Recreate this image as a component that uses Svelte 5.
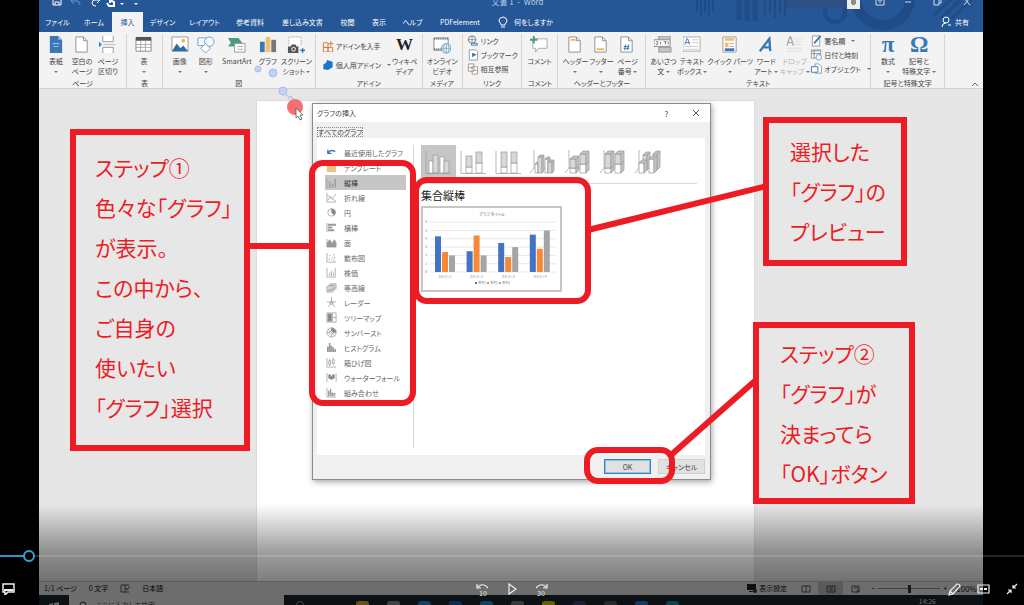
<!-- App.svelte -->
<script>
    const tabs = [
        'ファイル', 'ホーム', '挿入', 'デザイン', 'レイアウト', '参考資料',
        '差し込み文書', '校閲', '表示', 'ヘルプ', 'PDFelement'
    ];

    const sheet = '<path d="M3 1h8l4 4v12H3z" fill="#fff" stroke="#8f8f8f"/><path d="M11 1v4h4" fill="none" stroke="#8f8f8f"/>';

    const icons = {
        cover: '<path d="M3 0h9l4 4v14H3z" fill="#3a78b5"/><path d="M12 0v4h4" fill="#9cc0e0"/><path d="M6 8h7M7 11h5" stroke="#a9cdec"/>',
        blank: sheet,
        pageBreak: '<path d="M4 0v6h11V0M4 18v-6h11v6" fill="#fff" stroke="#9a9a9a"/><path d="M5 9h13" stroke="#aaa" stroke-dasharray="2 1"/><path d="M0 6l3 3-3 3z" fill="#3a78b5"/>',
        table: '<path d="M1 2h16v14H1z" fill="#fff" stroke="#8a8a8a"/><path d="M1 1h16v4H1z" fill="#555"/><path d="M1 9h16M1 12h16M6 5v11M11 5v11" stroke="#999" stroke-width=".8"/>',
        picture: '<path d="M1 1h17v15H1z" fill="#fff" stroke="#999"/><path d="M1 16l5-8 4 5 3-3 5 6z" fill="#2f6da8"/><circle cx="13" cy="5" r="2" fill="#efb758"/>',
        shapes: '<path d="M1 2h9v8H1z" fill="#fff" stroke="#6a9fca"/><circle cx="13" cy="6" r="5" fill="#f3f8fc" stroke="#6a9fca"/><path d="M9 8l5 5-5 5-5-5z" fill="#fff" stroke="#6a9fca"/>',
        smartart: '<path d="M0 2h11l4 5-4 4H0l3-4z" fill="#4c9b7c"/><path d="M7 8h11v9H7z" fill="#fff" stroke="#999"/><path d="M10 11h6M10 14h6" stroke="#aaa"/>',
        chart: '<path d="M1 6h5v11H1z" fill="#3a78b5"/><path d="M7 1h5v16H7z" fill="#efc06d"/><path d="M13 4h5v13h-5z" fill="#777"/>',
        screenshot: '<path d="M2 9V1h13v8" fill="#fff" stroke="#aaa" stroke-dasharray="2 1"/><path d="M1 11h3l1-2h4l1 2h2v7H1z" fill="#555"/><circle cx="7" cy="14" r="2" fill="#555" stroke="#fff"/><path d="M14 15h5M16.500 13v5" stroke="#3a78b5" stroke-width="1.500"/>',
        video: '<path d="M1 2h15v13H1z" fill="#fff" stroke="#888"/><path d="M1 3h15M1 14h15" stroke="#666" stroke-width="2" stroke-dasharray="1 1"/><circle cx="14" cy="13" r="5" fill="#eaf3fa" stroke="#5f9bc9"/><path d="M9 13h10M14 8v10M12 9q-2 4 0 8M16 9q2 4 0 8" fill="none" stroke="#5f9bc9" stroke-width=".7"/>',
        comment: '<path d="M3 3h15v10h-9l-3 4v-4H3z" fill="#fff" stroke="#aaa"/><path d="M0 4h8M4 0v8" stroke="#4c9b7c" stroke-width="2"/>',
        header: sheet + '<path d="M5 3h5v2H5z" fill="#efb758"/>',
        footer: sheet + '<path d="M5 13h8v2H5z" fill="#efb758"/>',
        pageNo: sheet + '<path d="M8 9l-1 6M11 9l-1 6M6 11h6M6 13h6" stroke="#3a78b5"/>',
        greeting: '<path d="M5 0h12v5H5zM5 12h13v5H5z" fill="#c4c4c4" stroke="#999"/><path d="M0 4h17v7H0z" fill="#fff" stroke="#888"/><path d="M2 6q3-1 2 2T2 8M7 6v3M10 6h3q-3 2 0 3M15 6v3" fill="none" stroke="#555" stroke-width=".8"/>',
        textbox: '<path d="M0 1h18v15H0z" fill="#fff" stroke="#aaa"/><path d="M2 9l2-6h1l2 6M3 7h4" fill="none" stroke="#3a78b5"/><path d="M10 4h6M10 7h6M2 11h14M2 14h14" stroke="#bbb" stroke-width=".8"/>',
        quick: '<path d="M2 1h14v16H2z" fill="#fff" stroke="#999"/><path d="M4 2h10v3H4zM4 7h4v5H4z" fill="#efc06d"/><path d="M9 8h5M9 11h5" stroke="#aaa"/><path d="M4 13h10v3H4z" fill="#3a78b5"/>',
        wordart: '<path d="M3 16L13 3l1 13M7 12h7" fill="none" stroke="#3a78b5" stroke-width="2.500"/>',
        dropcap: '<path d="M1 10l3-9h1l3 9M2 7h5" fill="none" stroke="#aaa" stroke-width="1.5"/><path d="M10 3h7M10 6h7M10 9h7M1 13h16M1 16h16" stroke="#ddd"/>',
        store: '<path d="M1 3h5v5H1zM1 8h5v5H1zM6 8h5v5H6zM9 1v6M6 4h6" fill="none" stroke="#d8763f"/>',
        addins: '<path d="M1 6l3-2 1-3 6 2v6l-5 3-5-1z" fill="#1976c8"/>',
        link: '<circle cx="5" cy="5" r="4" fill="#eef3f8" stroke="#777"/><path d="M1 5h8M5 1v8" stroke="#777" stroke-width=".7"/><path d="M4 10h7" stroke="#3a78b5" stroke-width="3"/><path d="M5 10h5" stroke="#fff"/>',
        bookmark: '<path d="M2 1h7l2 2v9H2z" fill="#fff" stroke="#999"/><path d="M5 4l5 2-5 3z" fill="#3a78b5"/>',
        crossref: '<path d="M1 1h6v8H1zM5 4h6v8H5z" fill="#fff" stroke="#999"/><path d="M2 5h4M7 8h3" stroke="#d8763f"/>',
        signature: '<path d="M2 1h8v11H2z" fill="#fff" stroke="#999"/><path d="M4 9l7-8" stroke="#3a78b5" stroke-width="2"/>',
        date: '<path d="M1 1h10v9H1z" fill="#fff" stroke="#999"/><path d="M1 2h10M1 5h10M4 2v8" stroke="#888"/><circle cx="9" cy="9" r="3" fill="#fff" stroke="#6a9fca"/>',
        object: '<path d="M5 1h4l3 3v7H5z" fill="#fff" stroke="#999"/><path d="M1 4h7v6H1z" fill="#fff" stroke="#3a78b5"/>'
    };

    const groups = [
        { name: 'ページ', items: [
            { icon: 'cover', lines: ['表紙', '▾'] },
            { icon: 'blank', lines: ['空白の', 'ページ'] },
            { icon: 'pageBreak', lines: ['ページ', '区切り'] }
        ] },
        { name: '表', items: [{ icon: 'table', lines: ['表', '▾'] }] },
        { name: '図', items: [
            { icon: 'picture', lines: ['画像', '▾'] },
            { icon: 'shapes', lines: ['図形', '▾'] },
            { icon: 'smartart', lines: ['SmartArt'], size: 'wide' },
            { icon: 'chart', lines: ['グラフ'] },
            { icon: 'screenshot', lines: ['スクリーン', 'ショット ▾'], size: 'mid' }
        ] },
        { name: 'アドイン', spaced: true,
            rows: [
                { icon: 'store', text: 'アドインを入手' },
                { icon: 'addins', text: '個人用アドイン', arrow: true }
            ],
            items: [{ letter: 'W', lines: ['ウィキペ', 'ディア'], tone: 'wiki' }]
        },
        { name: 'メディア', items: [{ icon: 'video', lines: ['オンライン', 'ビデオ'], size: 'mid' }] },
        { name: 'リンク', rows: [
            { icon: 'link', text: 'リンク' },
            { icon: 'bookmark', text: 'ブックマーク' },
            { icon: 'crossref', text: '相互参照' }
        ] },
        { name: 'コメント', items: [{ icon: 'comment', lines: ['コメント'] }] },
        { name: 'ヘッダーとフッター', items: [
            { icon: 'header', lines: ['ヘッダー', '▾'] },
            { icon: 'footer', lines: ['フッター', '▾'] },
            { icon: 'pageNo', lines: ['ページ', '番号 ▾'] }
        ] },
        { name: 'テキスト',
            items: [
                { icon: 'greeting', lines: ['あいさつ', '文 ▾'] },
                { icon: 'textbox', lines: ['テキスト', 'ボックス ▾'], size: 'mid' },
                { icon: 'quick', lines: ['クイック パーツ', '▾'], size: 'full' },
                { icon: 'wordart', lines: ['ワード', 'アート ▾'] },
                { icon: 'dropcap', lines: ['ドロップ', 'キャップ ▾'], disabled: true, size: 'mid' }
            ],
            trailing: [
                { icon: 'signature', text: '署名欄', arrow: true },
                { icon: 'date', text: '日付と時刻' },
                { icon: 'object', text: 'オブジェクト', arrow: true }
            ]
        },
        { name: '記号と特殊文字', items: [
            { letter: 'π', lines: ['数式', '▾'], tone: 'symbol' },
            { letter: 'Ω', lines: ['記号と', '特殊文字 ▾'], tone: 'symbol', size: 'wide' }
        ] }
    ];

    const axis = '<path d="M1 1v10h10" fill="none"/>';
    const kinds = [
        { name: '最近使用したグラフ', icon: '<path d="M2 3v4h4M2 7q3-5 8-2" fill="none" stroke="#3a78b5" stroke-width="1.5"/>' },
        { name: 'テンプレート', icon: '<path d="M1 3h10v8H1z" fill="#efc27d" stroke="none"/>' },
        { name: '縦棒', icon: axis + '<path d="M4 10V5M7 10V7M10 10V2" stroke-width="1.5"/>' },
        { name: '折れ線', icon: axis + '<path d="M2 9l3-4 2 2 4-5M2 4l4 3 5 3" fill="none"/>' },
        { name: '円', icon: '<circle cx="6" cy="6" r="4" fill="none"/><path d="M6 2v4l3 3a4 4 0 0 0-3-7" fill="#888"/>' },
        { name: '横棒', icon: '<path d="M1 1v10"/><path d="M2 3h9M2 6h5M2 9h7" stroke-width="2"/>' },
        { name: '面', icon: '<path d="M1 2v9h10V6L9 3 7 7 4 3 1 7" fill="#999"/>' },
        { name: '散布図', icon: axis + '<path d="M4 4h1M8 3h1M6 7h1M3 8h1M9 6h1M8 9h1" stroke-width="1.5"/>' },
        { name: '株価', icon: axis + '<path d="M4 10V6M6 10V4M8 10V6M10 10V1"/>' },
        { name: '等高線', icon: '<path d="M1 5l4-3h6v5l-4 4H1zM3 6q4-4 6 0-3 3-6 2" fill="#ddd"/><path d="M4 4h5M2 9h5l3-3" fill="none"/>' },
        { name: 'レーダー', icon: '<path d="M6 0v6l5-1M6 6l4 5M6 6l-4 5M6 6L1 5" fill="none"/><path d="M6 4l2 2-1 2H5L4 6z" fill="none"/>' },
        { name: 'ツリーマップ', icon: '<path d="M1 1h10v10H1z" fill="#fff"/><path d="M2 2h4v8H2z" fill="#888"/><path d="M7 1v10M7 6h4"/>' },
        { name: 'サンバースト', icon: '<circle cx="6" cy="6" r="5" fill="none"/><circle cx="6" cy="6" r="2" fill="none"/><path d="M6 1v3M8 6h3M6 8v3M1 6h3M2 2l8 8"/><path d="M6 1a5 5 0 0 1 5 5H8L6 4z" fill="#888"/>' },
        { name: 'ヒストグラム', icon: '<path d="M2 11V5M4 11V1M6 11V4M8 11V6M10 11V8" stroke-width="1.8"/>' },
        { name: '箱ひげ図', icon: axis + '<path d="M4 2v8M8 1v8" /><path d="M3 4h2v4H3zM7 3h2v4H7z" fill="#fff"/>' },
        { name: 'ウォーターフォール', icon: '<path d="M1 1v10M11 1v10"/><path d="M3 3h2v4H3zM5 5h2v3H5zM7 3h2v4H7z" fill="#777"/>' },
        { name: '組み合わせ', icon: axis + '<path d="M3 10V4M5 10V2M7 10V6M9 10V7" stroke-width="1.5"/><path d="M2 6l4 2 5-1" fill="none"/>' }
    ];

    // x, y, width, height, filled
    const subtypes = [
        { name: '集合縦棒', depth: 0, bars: [[8, 16, 4, 12, 0], [12, 10, 5, 18, 1], [19, 12, 4, 16, 0], [23, 16, 5, 12, 1]] },
        { name: '積み上げ縦棒', depth: 0, bars: [[10, 22, 6, 6, 0], [10, 11, 6, 11, 1], [20, 18, 6, 10, 0], [20, 7, 6, 11, 1]] },
        { name: '100% 積み上げ縦棒', depth: 0, bars: [[10, 22, 6, 6, 0], [10, 7, 6, 15, 1], [20, 18, 6, 10, 0], [20, 7, 6, 11, 1]] },
        { name: '3-D 集合縦棒', depth: 2, bars: [[9, 19, 3, 9, 0], [12, 12, 4, 16, 1], [19, 14, 3, 14, 0], [22, 17, 4, 11, 1]] },
        { name: '3-D 積み上げ縦棒', depth: 3, bars: [[9, 23, 6, 5, 0], [9, 14, 6, 9, 1], [19, 19, 6, 9, 0], [19, 9, 6, 10, 1]] },
        { name: '3-D 100% 積み上げ縦棒', depth: 3, bars: [[9, 23, 6, 5, 0], [9, 9, 6, 14, 1], [19, 19, 6, 9, 0], [19, 9, 6, 10, 1]] },
        { name: '3-D 縦棒', depth: 3, bars: [[12, 10, 4, 15, 1], [8, 18, 5, 10, 0], [22, 9, 4, 16, 1], [18, 14, 5, 14, 0]] }
    ];

    const series = [
        { name: '系列1', color: '#4472c4', values: [4.3, 2.5, 3.5, 4.5] },
        { name: '系列2', color: '#f5883a', values: [2.4, 4.4, 1.8, 2.8] },
        { name: '系列3', color: '#a5a5a5', values: [2, 2, 3, 5] }
    ];
    const unit = 8.3;
    const baseline = 64;

    const taskIcons = ['#d9a23c', '#8a8a8a', '#2088c9', '#1a5fae', '#1f8fc4', '#777777', '#d9c800', '#39406a', '#555555', '#2a78c4', '#1c8d9a'];

    let activeTab = $state('挿入');
    let activeKind = $state('縦棒');
    let activeSubtype = $state(0);
    let position = $state(2.3);
    let zoomLevel = $state(50);
</script>

{#snippet label(line)}
    {#if line.endsWith('▾')}
        {line.slice(0, -1)}<i class="arrow"></i>
    {:else}
        {line}
    {/if}
{/snippet}

{#snippet rowList(rows)}
    <div class="rows">
        {#each rows as row}
            <button class="row-btn">
                <svg width="12" height="12" viewBox="0 0 12 13">{@html icons[row.icon]}</svg>
                {row.text}
                {#if row.arrow}<i class="arrow spaced"></i>{/if}
            </button>
        {/each}
    </div>
{/snippet}

<main class="player">
    <section class="video">
        <header class="topbar">
            <svg class="pattern" width="300" height="32" viewBox="0 0 300 32" fill="none" stroke="#1f4c86">
                <path d="M14 0v12M18 0v16M22 0v13M26 0v17M30 0v12" stroke-width="2" />
                <path d="M56 0v20M64 0v21M72 0v21" stroke-width="5" />
                <path d="M82 0v17M87 0v14M92 0v18M97 0v14M102 0v16" stroke-width="2" />
                <circle cx="152" cy="12" r="10" stroke-width="4" />
                <circle cx="200" cy="-2" r="27" stroke-width="10" />
                <path d="M250 16l18-16M258 18l20-18M268 19l20-19" stroke-width="3" />
            </svg>
            <div class="titlebar">
                <div class="quick">
                    <svg width="90" height="12" viewBox="0 0 90 12" fill="none" stroke="#fff">
                        <path d="M1 1h8v8H1zM3 9V6h4v3" />
                        <path d="M20 5h5q3 0 3 4M22 2l-3 3 3 3" stroke="#6f93c4" />
                        <path d="M47 4h-4q-3 0-3 3t4 3M45 1l3 3-3 3" />
                        <path d="M58 7V1M58 4l4 2v4h-5l-2-3" stroke-width="2" />
                        <path d="M68 7l2 2 2-2zM82 7l2 2 2-2z" fill="#fff" stroke="none" />
                    </svg>
                </div>
                <span class="doc-title">文書 1 &nbsp;-&nbsp; Word</span>
                <div class="window-tools">
                    <span class="account"></span>
                    <span class="avatar"></span>
                    <svg width="110" height="12" viewBox="0 0 110 12" fill="none" stroke="#d3deed">
                        <path d="M4 1h8v8H4zM8 7V3M6 5l2-2 2 2M33 6h6M62 3h5v6h-5zM64 3V1h5v6h-2M92 2l6 7M98 2l-6 7" />
                    </svg>
                </div>
            </div>
            <nav class="tabs">
                {#each tabs as tab}
                    <button class="tab" class:active={activeTab === tab} onclick={() => (activeTab = tab)}>{tab}</button>
                {/each}
                <button class="tab tell-me">
                    <svg width="10" height="12" viewBox="0 0 10 12" fill="none" stroke="#fff">
                        <path d="M3 8Q1 6 1 4t4-3q4 1 4 3T7 8v1H3zM3 11h4" />
                    </svg>
                    何をしますか
                </button>
                <button class="tab share">
                    <svg width="10" height="12" viewBox="0 0 10 12" fill="none" stroke="#fff">
                        <circle cx="5" cy="4" r="3" /><path d="M1 11q0-4 4-4M7 9h3" />
                    </svg>
                    共有
                </button>
            </nav>
        </header>

        <div class="ribbon">
            {#each groups as group}
                <div class="group">
                    <div class="group-body" class:spaced={group.spaced}>
                        {#if group.rows}{@render rowList(group.rows)}{/if}
                        {#each group.items ?? [] as item}
                            <button class="tool {item.size ?? ''}" disabled={item.disabled}>
                                {#if item.letter}
                                    <span class="letter {item.tone}">{item.letter}</span>
                                {:else}
                                    <svg width="18" height="18" viewBox="0 0 19 19">{@html icons[item.icon]}</svg>
                                {/if}
                                {#each item.lines as line}
                                    <span class="line">{@render label(line)}</span>
                                {/each}
                            </button>
                        {/each}
                        {#if group.trailing}{@render rowList(group.trailing)}{/if}
                    </div>
                    <div class="group-name">{group.name}</div>
                </div>
            {/each}
            <button class="collapse" aria-label="リボンを折りたたむ">
                <svg width="8" height="6" viewBox="0 0 8 6" fill="none" stroke="#666"><path d="M1 5l3-3 3 3" /></svg>
            </button>
        </div>

        <div class="canvas">
            <div class="paper"></div>
        </div>

        <footer class="statusbar">
            <span>1/1 ページ</span>
            <span>0 文字</span>
            <svg width="10" height="9" viewBox="0 0 10 9" fill="none" stroke="#555"><path d="M1 1h4v7H1zM5 1h4M5 8h4M6 4l1 2 3-4" /></svg>
            <span>日本語</span>
            <div class="view-tools">
                <span class="display-setting">
                    <svg width="10" height="9" viewBox="0 0 10 9"><path d="M0 0h9v6H0zM2 7h4v1H2z" fill="#222" /><circle cx="8" cy="7" r="2" fill="#333" /></svg>
                    表示設定
                </span>
                <button class="view" aria-label="閲覧モード">
                    <svg width="10" height="8" viewBox="0 0 10 8" fill="none" stroke="#555"><path d="M1 1h8v6H1zM5 1v6" /></svg>
                </button>
                <button class="view on" aria-label="印刷レイアウト">
                    <svg width="10" height="8" viewBox="0 0 10 8" fill="none" stroke="#444"><path d="M1 1h8v6H1zM3 3h4M3 5h4" /></svg>
                </button>
                <button class="view" aria-label="Web レイアウト">
                    <svg width="10" height="8" viewBox="0 0 10 8" fill="none" stroke="#555"><path d="M1 1h7v6H1zM3 3h4" /><circle cx="7" cy="6" r="1" /></svg>
                </button>
                <span class="zoom-sign">−</span>
                <input class="zoom-range" type="range" aria-label="ズーム" bind:value={zoomLevel} />
                <span class="zoom-sign">+</span>
                <span class="percent">100%</span>
            </div>
        </footer>

        <div class="taskbar">
            <div class="start">
                <svg width="10" height="10" viewBox="0 0 10 10" fill="#ccc"><path d="M0 2l4-1v4H0zM5 1l5-1v5H5zM0 6h4v4H0zM5 6h5v4H5z" /></svg>
            </div>
            <div class="search">
                <svg width="8" height="8" viewBox="0 0 8 8" fill="none" stroke="#333"><circle cx="4" cy="4" r="3" /></svg>
                ここに入力して検索
            </div>
            <div class="apps">
                <span class="ring"></span>
                {#each taskIcons as color}
                    <span class="app" style:background={color}></span>
                {/each}
            </div>
            <time class="clock">14:26</time>
        </div>
    </section>

    <div class="stage">
        <svg class="pointer-trail" width="60" height="64" viewBox="0 0 60 64">
            <g fill="#c3d0fa" stroke="#a9baf4">
                <circle cx="8" cy="9" r="3" /><circle cx="23" cy="13" r="4" /><circle cx="33" cy="31" r="4" />
                <path d="M36 35l8 4M38 39l4-3" fill="none" />
            </g>
            <circle cx="45" cy="47" r="8" fill="#f56e70" />
            <path d="M46 48v10l2-2 2 4 2-1-2-4h3z" fill="#fff" stroke="#555" stroke-width=".8" />
        </svg>

        <section class="dialog" aria-label="グラフの挿入">
            <div class="dialog-title">
                <span>グラフの挿入</span>
                <button class="title-btn">?</button>
                <button class="title-btn" aria-label="閉じる">
                    <svg width="8" height="8" viewBox="0 0 8 8" fill="none" stroke="#555"><path d="M1 1l6 6M7 1L1 7" /></svg>
                </button>
            </div>
            <div class="dialog-tabs"><button class="all-charts">すべてのグラフ</button></div>
            <div class="dialog-body">
                <ul class="kinds">
                    {#each kinds as kind}
                        <li>
                            <button class="kind" class:selected={activeKind === kind.name} onclick={() => (activeKind = kind.name)}>
                                <svg width="11" height="11" viewBox="0 0 12 12" stroke="#999" stroke-width=".8">{@html kind.icon}</svg>
                                {kind.name}
                            </button>
                        </li>
                    {/each}
                </ul>
                <div class="detail">
                    <div class="subtypes">
                        {#each subtypes as type, i}
                            <button class="subtype" class:selected={activeSubtype === i} aria-label={type.name} onclick={() => (activeSubtype = i)}>
                                <svg width="35" height="33" viewBox="0 0 35 33" stroke="#999" stroke-width=".7">
                                    {#if type.depth}
                                        <path d="M8 5v18l-4 5M8 23h20" fill="none" />
                                    {:else}
                                        <path d="M5 6v22.500h25" fill="none" />
                                    {/if}
                                    {#each type.bars as [x, y, w, h, filled]}
                                        <rect {x} {y} width={w} height={h} fill={filled ? '#d8d8d8' : '#fff'} />
                                        {#if type.depth}
                                            <path d="M{x} {y}l{type.depth} -{type.depth}h{w}v{h}l-{type.depth} {type.depth}v-{h}zM{x + w} {y}l{type.depth} -{type.depth}" fill="#c4c4c4" />
                                        {/if}
                                    {/each}
                                </svg>
                            </button>
                        {/each}
                    </div>
                    <h2>{subtypes[activeSubtype].name}</h2>
                    <div class="preview">
                        <svg width="137" height="82" viewBox="0 0 137 82">
                            <text class="chart-title" x="69" y="8">グラフ タイトル</text>
                            {#each [0, 1, 2, 3, 4, 5, 6] as tick}
                                <path d="M7 {baseline - tick * unit}h126" stroke="#dedede" stroke-width=".7" />
                                <text class="tiny" x="3" y={baseline + 1 - tick * unit}>{tick}</text>
                            {/each}
                            {#each series as s, si}
                                {#each s.values as value, i}
                                    <rect x={12 + i * 31.6 + si * 7} y={baseline - value * unit} width="6" height={value * unit} fill={s.color} />
                                {/each}
                                <rect x={52 + si * 12} y="74" width="2" height="2" fill={s.color} />
                                <text class="tiny" x={59 + si * 12} y="76">{s.name}</text>
                            {/each}
                            {#each [1, 2, 3, 4] as n}
                                <text class="tiny" x={22 + (n - 1) * 31.6} y="70">カテゴリ {n}</text>
                            {/each}
                        </svg>
                    </div>
                </div>
            </div>
            <div class="dialog-actions">
                <button class="action primary">OK</button>
                <button class="action">キャンセル</button>
            </div>
        </section>

        <svg class="connectors" width="944" height="605" viewBox="39 0 944 605" fill="none" stroke="#ed1c24">
            <path d="M249 246h63M588 230l179-44M671 455l85-75" stroke-width="6" />
        </svg>
        <div class="frame frame-kinds"></div>
        <div class="frame frame-preview"></div>
        <div class="frame frame-ok"></div>

        <p class="note note-step1">ステップ①<br />色々な「グラフ」<br />が表示。<br />この中から、<br />ご自身の<br />使いたい<br />「グラフ」選択</p>
        <p class="note note-preview">選択した<br />「グラフ」の<br />プレビュー</p>
        <p class="note note-step2">ステップ②<br />「グラフ」が<br />決まってら<br />「OK」ボタン</p>
    </div>

    <div class="controls">
        <input class="seek" type="range" min="0" max="100" step="0.1" aria-label="再生位置" bind:value={position} style:--played="{position}%" />
        <div class="control-row">
            <div class="side">
                <button class="ctl narrow" aria-label="字幕">
                    <svg width="14" height="12" viewBox="0 0 14 12" fill="none" stroke="#eee" stroke-width="1.500"><path d="M1 1h11v8H6l-3 3V9H1z" /><path d="M2 7h9" stroke-width="2" /></svg>
                </button>
            </div>
            <div class="side">
                <button class="ctl skip" aria-label="10 秒戻る">
                    <svg width="14" height="7" viewBox="0 0 14 7" fill="none" stroke="#eee" stroke-width="1.200"><path d="M2 4q5-5 10 1M1 1v4h4" /></svg>
                    10
                </button>
                <button class="ctl" aria-label="再生">
                    <svg width="10" height="12" viewBox="0 0 10 12" fill="none" stroke="#eee" stroke-width="1.200"><path d="M2 1l7 5-7 5z" /></svg>
                </button>
                <button class="ctl skip" aria-label="30 秒進む">
                    <svg width="14" height="7" viewBox="0 0 14 7" fill="none" stroke="#eee" stroke-width="1.200"><path d="M2 5q5-6 10-1M13 1v4H9" /></svg>
                    30
                </button>
            </div>
            <div class="side end">
                <button class="ctl" aria-label="編集">
                    <svg width="13" height="13" viewBox="0 0 13 13" fill="none" stroke="#eee" stroke-width="1.200"><path d="M1 12l1-4 7-7q3 0 3 2l-7 8zM2 8l3 3" /></svg>
                </button>
                <button class="ctl" aria-label="ミニ ビュー">
                    <svg width="13" height="10" viewBox="0 0 13 10" fill="none" stroke="#eee" stroke-width="1.200"><path d="M1 1h11v8H1z" /><path d="M3 5h3M7 5h3" stroke-width="2" /></svg>
                </button>
                <button class="ctl" aria-label="全画面表示の終了">
                    <svg width="12" height="12" viewBox="0 0 12 12" fill="none" stroke="#eee" stroke-width="1.200"><path d="M1 11l4-4M2 7h3v3M11 1L7 5M7 2v3h3" /></svg>
                </button>
            </div>
        </div>
    </div>
</main>

<style>
    :global(body) {
        margin: 0;
        background: #000;
    }

    .player {
        position: relative;
        height: 100vh;
        min-height: 605px;
        padding: 0 41px 0 39px;
        box-sizing: border-box;
        overflow: hidden;
        background: #000;
        color: #444;
        font-family: "Noto Sans CJK JP", sans-serif;
        font-size: 7px;
        font-feature-settings: "palt";
    }
    .player button {
        margin: 0;
        padding: 0;
        border: none;
        background: none;
        color: inherit;
        font: inherit;
        font-feature-settings: inherit;
        white-space: nowrap;
    }
    svg {
        display: block;
        flex-shrink: 0;
    }

    .video {
        display: flex;
        flex-direction: column;
        height: 100%;
        background: #e6e6e6;
    }

    /* ── Title bar and tabs ── */
    .topbar {
        position: relative;
        overflow: hidden;
        flex-shrink: 0;
        background: #255797;
        color: #fff;
    }
    .pattern {
        position: absolute;
        right: 0;
        top: 0;
    }
    .titlebar {
        position: relative;
        display: grid;
        grid-template-columns: 1fr auto 1fr;
        align-items: center;
        height: 20px;
        margin-top: -8px;
        padding: 0 0 0 13px;
    }
    .doc-title {
        color: #b9cae2;
        font-size: 8px;
        line-height: 10px;
    }
    .window-tools {
        display: flex;
        justify-content: flex-end;
        align-items: center;
        padding-right: 1px;
    }
    .account {
        width: 61px;
        height: 12px;
        background: #2c5084;
    }
    .avatar {
        width: 13px;
        height: 14px;
        margin-right: 12px;
        background: radial-gradient(circle at 50% 50%, #8c8c8c 3px, #eee 3px);
    }
    .tabs {
        position: relative;
        display: grid;
        grid-template-columns: 37px 36px 31px 39px 45px 46px 59px 31px 32px 35px 60px 70px 1fr;
        height: 20px;
    }
    .player .tab {
        line-height: 20px;
        text-align: center;
    }
    .player .tab.active {
        background: #f3f3f3;
        color: #255797;
    }
    .player .tell-me,
    .player .share {
        display: flex;
        align-items: center;
        gap: 6px;
        padding-left: 8px;
    }
    .player .share {
        justify-content: flex-end;
        gap: 4px;
        padding-right: 14px;
    }

    /* ── Ribbon ── */
    .ribbon {
        display: grid;
        grid-template-columns: 88fr 36fr 153fr 107fr 40fr 60fr 36fr 88fr 225fr 74fr 38fr;
        flex-shrink: 0;
        height: 57px;
        background: #f3f3f3;
        border-bottom: 1px solid #d2d2d2;
        box-sizing: border-box;
    }
    .group {
        display: flex;
        flex-direction: column;
        min-width: 0;
        margin: 2px 0 0;
        border-right: 1px solid #d4d4d4;
    }
    .group-body {
        display: flex;
        flex: 1;
        padding: 2px 4px 0;
    }
    .group-body.spaced {
        justify-content: space-between;
    }
    .group-name {
        line-height: 10px;
        text-align: center;
        white-space: nowrap;
    }
    .tool {
        display: flex;
        flex-direction: column;
        align-items: center;
        flex: 0 0 26px;
    }
    .tool svg,
    .letter {
        height: 18px;
        margin-bottom: 2px;
    }
    .player .tool:disabled {
        color: #b5b5b5;
    }
    .tool.mid {
        flex-basis: 31px;
    }
    .tool.wide {
        flex-basis: 36px;
    }
    .tool.full {
        flex-basis: 44px;
    }
    .letter {
        font-family: "Liberation Serif", serif;
        font-size: 17px;
        line-height: 18px;
        font-weight: 700;
    }
    .letter.wiki {
        color: #222;
    }
    .letter.symbol {
        font-size: 23px;
        color: #3a78b5;
    }
    .line {
        line-height: 10px;
        min-height: 10px;
    }
    .arrow {
        display: inline-block;
        border: 2px solid transparent;
        border-top-color: #777;
        border-bottom: none;
        vertical-align: middle;
    }
    .arrow.spaced {
        margin-left: 4px;
    }
    .rows {
        display: flex;
        flex-direction: column;
        gap: 4px;
    }
    .spaced .rows {
        gap: 9px;
        padding: 5px 0 0 2px;
    }
    .row-btn {
        display: flex;
        align-items: center;
        gap: 2px;
        height: 10px;
    }
    .collapse {
        display: flex;
        align-items: flex-end;
        justify-content: flex-end;
    }
    .collapse svg {
        margin: 0 4px 1px 0;
    }

    /* ── Document ── */
    .canvas {
        display: flex;
        flex: 1;
        justify-content: center;
        padding: 12px 11px 0 0;
    }
    .paper {
        width: 497px;
        background: #fff;
        outline: 1px solid #dcdcdc;
    }

    /* ── Status bar ── */
    .statusbar {
        display: flex;
        align-items: center;
        flex-shrink: 0;
        gap: 12px;
        height: 14px;
        padding: 0 6px 0 5px;
        background: #e3e3e3;
        border-top: 1px solid #bbb;
        box-sizing: border-box;
        color: #111;
        line-height: 13px;
    }
    .view-tools {
        display: flex;
        align-items: center;
        margin-left: auto;
    }
    .display-setting {
        display: flex;
        align-items: center;
        gap: 2px;
        margin-right: 6px;
    }
    .view {
        display: flex;
        align-items: center;
        justify-content: center;
        width: 25px;
        height: 13px;
    }
    .player .view.on {
        background: #bdbdbd;
    }
    .zoom-sign {
        width: 10px;
        text-align: center;
    }
    .zoom-range {
        appearance: none;
        width: 62px;
        height: 9px;
        margin: 0;
        background: linear-gradient(#888, #888) center / 100% 1px no-repeat;
    }
    .zoom-range::-webkit-slider-thumb {
        appearance: none;
        width: 3px;
        height: 8px;
        background: #333;
    }
    .percent {
        margin-left: 6px;
        font-size: 8px;
    }

    /* ── Taskbar, mostly below the fold ── */
    .taskbar {
        display: flex;
        flex-shrink: 0;
        height: 10px;
        overflow: hidden;
        background: #16242c;
    }
    .start {
        width: 30px;
        padding: 7px 0 0 10px;
        box-sizing: border-box;
    }
    .search {
        display: flex;
        gap: 9px;
        width: 215px;
        padding: 6px 0 0 10px;
        box-sizing: border-box;
        background: #e4e4e4;
        line-height: 8px;
    }
    .apps {
        display: flex;
        align-items: flex-start;
        gap: 18px;
        padding: 6px 0 0 12px;
    }
    .ring {
        width: 6px;
        height: 6px;
        margin-right: 34px;
        border: 1px solid #999;
        border-radius: 50%;
    }
    .app {
        width: 13px;
        height: 10px;
        border-radius: 3px 3px 0 0;
    }
    .clock {
        margin-left: auto;
        padding: 1px 47px 0 0;
        color: #ddd;
        line-height: 10px;
    }

    /* ── Stage: layers centred over the video ── */
    .stage {
        position: absolute;
        top: 0;
        left: calc(50% - 473px);
        width: 944px;
        height: 605px;
    }
    .pointer-trail {
        position: absolute;
        left: 211px;
        top: 60px;
    }
    .connectors {
        position: absolute;
        left: 0;
        top: 0;
    }

    /* ── Chart dialog ── */
    .dialog {
        position: absolute;
        left: 273px;
        top: 103px;
        display: flex;
        flex-direction: column;
        width: 399px;
        height: 377px;
        box-sizing: border-box;
        border: 1px solid #8c8c8c;
        background: #f0f0f0;
        box-shadow: 1px 2px 6px rgba(0, 0, 0, 0.35);
    }
    .dialog-title {
        display: flex;
        align-items: center;
        height: 18px;
        padding-left: 4px;
        background: #fff;
    }
    .dialog-title span {
        flex: 1;
    }
    .title-btn {
        display: flex;
        align-items: center;
        justify-content: center;
        width: 29px;
        height: 18px;
    }
    .player .title-btn {
        font-size: 8px;
    }
    .dialog-tabs {
        padding: 5px 4px 0;
        height: 11px;
    }
    .player .all-charts {
        display: block;
        border: 1px dotted #888;
        line-height: 8px;
    }
    .dialog-body {
        display: flex;
        flex: 1;
        margin: 0 5px 0 4px;
        padding: 7px 8px;
        background: #fff;
    }
    .kinds {
        width: 81px;
        margin: 0;
        padding: 0 7px 0 0;
        border-right: 1px solid #d9d9d9;
        list-style: none;
    }
    .kind {
        display: flex;
        align-items: center;
        gap: 7px;
        width: 100%;
        height: 15px;
    }
    .player .kind {
        padding-left: 1px;
        color: #666;
    }
    .player .kind.selected {
        background: #c6c6c6;
        color: #333;
    }
    .detail {
        flex: 1;
        padding-left: 7px;
    }
    .subtypes {
        display: flex;
        height: 38px;
        border-bottom: 1px solid #d9d9d9;
    }
    .subtype {
        width: 35px;
        height: 33px;
    }
    .player .subtype.selected {
        background: #c6c6c6;
    }
    .detail h2 {
        margin: 0;
        padding: 4px 0 3px;
        color: #222;
        font-size: 11px;
        font-weight: 400;
        line-height: 15px;
    }
    .preview {
        width: 137px;
        border: 2px solid #c6c6c6;
    }
    .chart-title {
        fill: #666;
        font-size: 4px;
        text-anchor: middle;
    }
    .tiny {
        fill: #777;
        font-size: 3px;
        text-anchor: middle;
    }
    .dialog-actions {
        display: flex;
        justify-content: flex-end;
        gap: 7px;
        padding: 4px 5px 5px;
    }
    .player .action {
        width: 47px;
        height: 15px;
        border: 1px solid #d0d0d0;
        background: #e1e1e1;
        line-height: 12px;
    }
    .player .action.primary {
        border-color: #2f86c0;
        box-shadow: inset 0 0 0 1px #8fc0e2;
    }

    /* ── Red annotations ── */
    .frame {
        position: absolute;
        box-sizing: border-box;
        border: 6px solid #ed1c24;
        border-radius: 14px;
    }
    .frame-kinds {
        left: 270px;
        top: 160px;
        width: 107px;
        height: 246px;
    }
    .frame-preview {
        left: 374px;
        top: 177px;
        width: 178px;
        height: 127px;
    }
    .frame-ok {
        left: 545px;
        top: 447px;
        width: 91px;
        height: 37px;
    }
    .note {
        position: absolute;
        margin: 0;
        box-sizing: border-box;
        border: 6px solid #ed1c24;
        background: #e7e7e7;
        color: #ed1c24;
        font-size: 21px;
        line-height: 40px;
        white-space: nowrap;
    }
    .note-step1 {
        left: 31px;
        top: 129px;
        width: 180px;
        height: 322px;
        padding: 12px 0 0 19px;
    }
    .note-preview {
        left: 724px;
        top: 117px;
        width: 144px;
        height: 149px;
        padding: 8px 0 0 21px;
    }
    .note-step2 {
        left: 714px;
        top: 322px;
        width: 162px;
        height: 182px;
        padding: 5px 0 0 21px;
    }

    /* ── Player controls ── */
    .controls {
        position: absolute;
        left: 0;
        right: 0;
        bottom: 0;
        display: flex;
        flex-direction: column;
        justify-content: flex-end;
        height: 101px;
        pointer-events: none;
        background: linear-gradient(rgba(0, 0, 0, 0), rgba(0, 0, 0, 0.38) 48px, rgba(0, 0, 0, 0.52) 80px);
    }
    .controls input,
    .controls button {
        pointer-events: auto;
    }
    .seek {
        appearance: none;
        width: 100%;
        height: 12px;
        margin: 0 0 15px;
        background:
            linear-gradient(to right, #2d93c9 var(--played), rgba(255, 255, 255, 0.15) var(--played)) center / 100% 2px no-repeat;
    }
    .seek::-webkit-slider-thumb {
        appearance: none;
        width: 12px;
        height: 12px;
        box-sizing: border-box;
        border: 2px solid #38a0d6;
        border-radius: 50%;
        background: #000;
    }
    .control-row {
        display: grid;
        grid-template-columns: 1fr auto 1fr;
        align-items: center;
        height: 24px;
        margin-bottom: 4px;
    }
    .side {
        display: flex;
        gap: 5px;
    }
    .side.end {
        justify-content: flex-end;
    }
    .ctl {
        display: flex;
        flex-direction: column;
        align-items: center;
        justify-content: center;
        width: 24px;
        height: 24px;
    }
    .ctl.narrow {
        width: 18px;
    }
    .player .ctl.skip {
        color: #eee;
        line-height: 6px;
    }
</style>
